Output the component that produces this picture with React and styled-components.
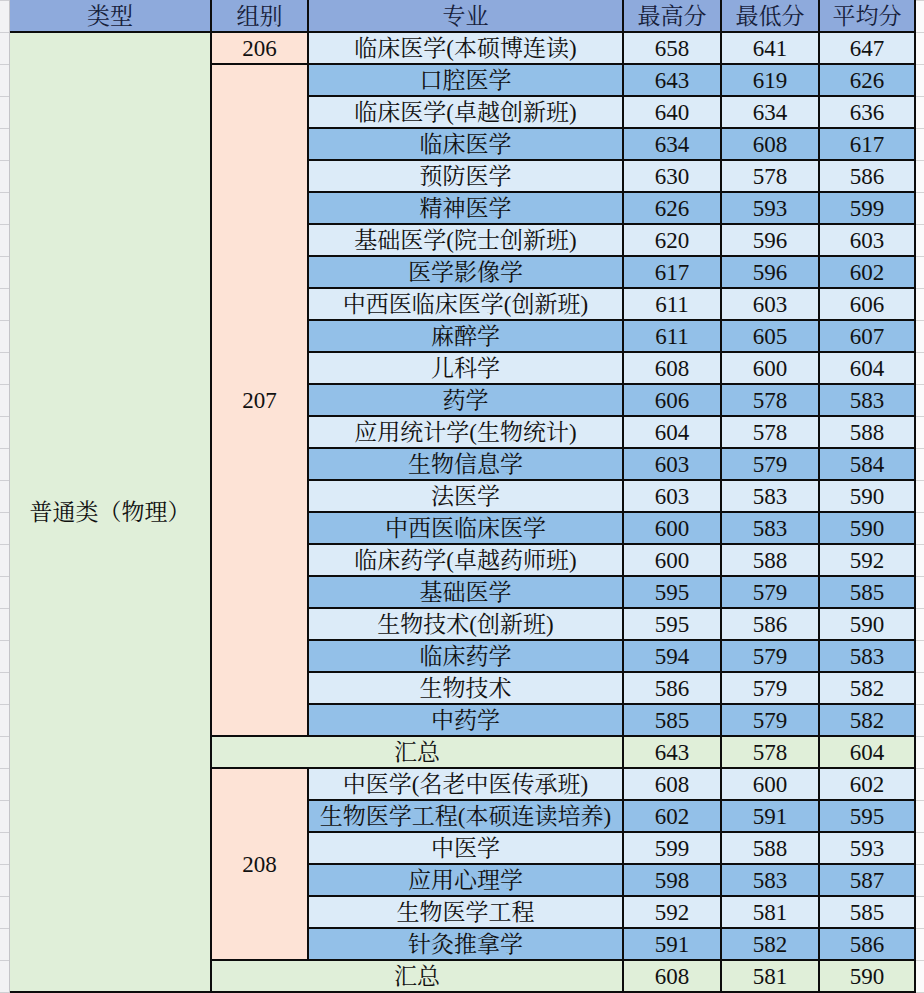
import React from 'react';
import styled, { createGlobalStyle } from 'styled-components';

const GlobalStyle = createGlobalStyle`
  html, body {
    margin: 0;
    padding: 0;
    background: #ffffff;
  }
`;

const groups = [
  {
    code: '206',
    rows: [['临床医学(本硕博连读)', 658, 641, 647]],
  },
  {
    code: '207',
    rows: [
      ['口腔医学', 643, 619, 626],
      ['临床医学(卓越创新班)', 640, 634, 636],
      ['临床医学', 634, 608, 617],
      ['预防医学', 630, 578, 586],
      ['精神医学', 626, 593, 599],
      ['基础医学(院士创新班)', 620, 596, 603],
      ['医学影像学', 617, 596, 602],
      ['中西医临床医学(创新班)', 611, 603, 606],
      ['麻醉学', 611, 605, 607],
      ['儿科学', 608, 600, 604],
      ['药学', 606, 578, 583],
      ['应用统计学(生物统计)', 604, 578, 588],
      ['生物信息学', 603, 579, 584],
      ['法医学', 603, 583, 590],
      ['中西医临床医学', 600, 583, 590],
      ['临床药学(卓越药师班)', 600, 588, 592],
      ['基础医学', 595, 579, 585],
      ['生物技术(创新班)', 595, 586, 590],
      ['临床药学', 594, 579, 583],
      ['生物技术', 586, 579, 582],
      ['中药学', 585, 579, 582],
    ],
    total: [643, 578, 604],
  },
  {
    code: '208',
    rows: [
      ['中医学(名老中医传承班)', 608, 600, 602],
      ['生物医学工程(本硕连读培养)', 602, 591, 595],
      ['中医学', 599, 588, 593],
      ['应用心理学', 598, 583, 587],
      ['生物医学工程', 592, 581, 585],
      ['针灸推拿学', 591, 582, 586],
    ],
    total: [608, 581, 590],
  },
];

const headers = ['类型', '组别', '专业', '最高分', '最低分', '平均分'];

const App = () => {
  // body rows start at grid line 2; alternate shading runs over the whole list
  let line = 2;
  let stripe = 0;
  const cells = [];

  groups.forEach((g) => {
    const start = line;
    g.rows.forEach((r) => {
      const shade = stripe % 2 === 0 ? 'light' : 'dark';
      stripe += 1;
      cells.push(
        <Major key={`m${line}`} $shade={shade}>{r[0]}</Major>,
        <Score key={`a${line}`} $shade={shade}>{r[1]}</Score>,
        <Score key={`b${line}`} $shade={shade}>{r[2]}</Score>,
        <Score key={`c${line}`} $shade={shade}>{r[3]}</Score>
      );
      line += 1;
    });
    cells.push(
      <Group key={`g${g.code}`} $from={start} $to={line}>{g.code}</Group>
    );
    if (g.total) {
      cells.push(
        <TotalLabel key={`t${line}`} $row={line}>汇总</TotalLabel>,
        ...g.total.map((v, i) => <Total key={`t${line}-${i}`}>{v}</Total>)
      );
      line += 1;
    }
  });

  return (
    <>
      <GlobalStyle />
      <Sheet lang="zh-CN">
        <LeftGutter />
        <Table>
          {headers.map((h) => (
            <Head key={h}>{h}</Head>
          ))}
          <Category $to={line}>普通类（物理）</Category>
          {cells}
        </Table>
        <RightGutter />
      </Sheet>
    </>
  );
};

export default App;

const shades = {
  light: '#dcebf8',
  dark: '#93c0e8',
};

const Sheet = styled.div`
  display: flex;
  width: 924px;
  height: 993px;
  overflow: hidden;
  font-family: 'Liberation Serif', 'Noto Serif CJK SC', 'Noto Sans CJK SC', serif;
  color: #111111;
`;

const LeftGutter = styled.div`
  width: 9px;
  flex: none;
  border-right: 1px solid #c4c4c8;
  background-color: #f2f2f4;
  background-image: linear-gradient(to bottom, transparent 0 31px, #cfcfd3 31px 32px);
  background-size: 100% 32px;
  background-position: 0 1px;
`;

const RightGutter = styled.div`
  flex: 1;
  background-color: #fbfbfb;
  background-image: linear-gradient(to bottom, transparent 0 31px, #d4d4d4 31px 32px);
  background-size: 100% 32px;
  background-position: 0 1px;
`;

const Table = styled.div`
  display: grid;
  grid-template-columns: 200px 95px 313px 96px 96px 94px;
  grid-template-rows: 31px repeat(30, 30px);
  gap: 2px;
  background: #0c0c0c;
  border-right: 2px solid #0c0c0c;
  border-bottom: 2px solid #0c0c0c;
  flex: none;
`;

const Cell = styled.div`
  display: flex;
  align-items: center;
  justify-content: center;
  font-size: 23px;
  line-height: 1;
  white-space: nowrap;
`;

const Head = styled(Cell)`
  background: #8eaadc;
  color: #16203a;
  padding-top: 1px;
`;

const Category = styled(Cell)`
  grid-column: 1;
  grid-row: 2 / ${(p) => p.$to};
  background: #e0efd9;
`;

const Group = styled(Cell)`
  grid-column: 2;
  grid-row: ${(p) => p.$from} / ${(p) => p.$to};
  background: #fde3d6;
`;

const Major = styled(Cell)`
  background: ${(p) => shades[p.$shade]};
`;

const Score = styled(Cell)`
  background: ${(p) => shades[p.$shade]};
`;

const TotalLabel = styled(Cell)`
  grid-column: 2 / 4;
  grid-row: ${(p) => p.$row};
  background: #e0efd9;
`;

const Total = styled(Cell)`
  background: #e0efd9;
`;
